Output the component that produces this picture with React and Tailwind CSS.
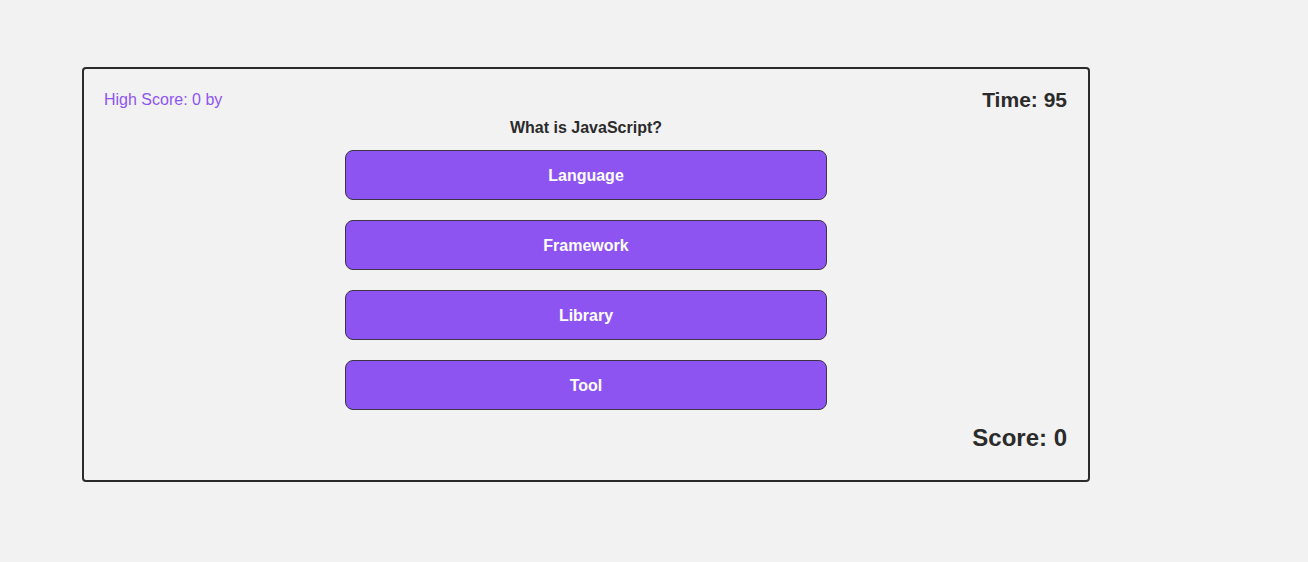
export default function App() {
  const answers = ["Language", "Framework", "Library", "Tool"];
  return (
    <div className="min-h-screen w-full bg-[#f2f2f2] pt-[67px] pl-[82px]" style={{ fontFamily: '"Liberation Sans", Arial, sans-serif' }}>
      <div className="w-[1008px] h-[415px] border-2 border-[#2b2b2b] rounded-[4px] px-[20px] pt-[19px] flex flex-col text-[#2b2b2b]">
        <div className="flex justify-between items-center h-[24px] pr-px">
          <span className="text-[16px] text-[#8e54f1]">High Score: 0 by</span>
          <span className="text-[21px] font-bold">Time: 95</span>
        </div>
        <div className="mt-[7px] text-center text-[16px] font-bold leading-[18px]">What is JavaScript?</div>
        <div className="mt-[13px] flex flex-col items-center gap-[20px]">
          {answers.map((a) => (
            <button
              key={a}
              className="w-[482px] h-[50px] rounded-[8px] border border-[#3b3545] bg-[#8e54f1] text-white font-bold text-[16px] pt-[2px]"
            >
              {a}
            </button>
          ))}
        </div>
        <div className="mt-[14px] text-right text-[24px] font-bold leading-[28px] pr-px">Score: 0</div>
      </div>
    </div>
  );
}
